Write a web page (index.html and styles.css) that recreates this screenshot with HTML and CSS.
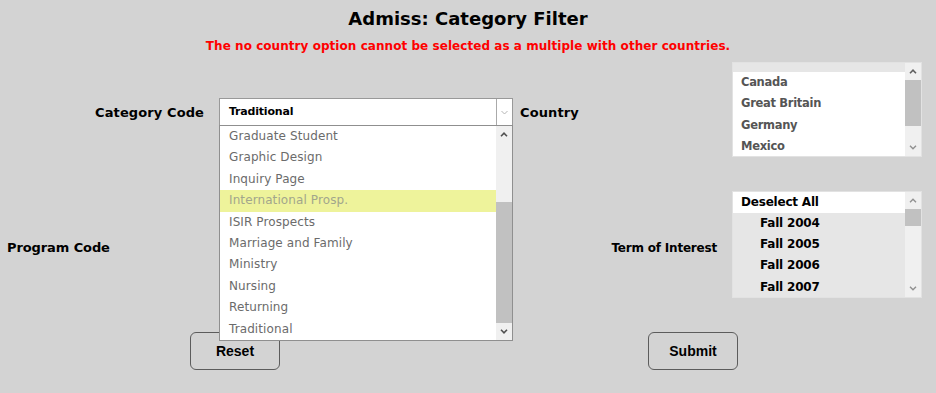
FILE: index.html
```html
<!DOCTYPE html>
<html lang="en">

<head>
    <meta charset="UTF-8">
    <meta name="viewport" content="width=device-width, initial-scale=1.0">
    <title>Admiss: Category Filter</title>
    <link rel="stylesheet" href="styles.css">
</head>

<body>
    <div id="page">
        <h1 class="title">Admiss: Category Filter</h1>
        <p class="warn">The no country option cannot be selected as a multiple with other countries.</p>

        <div class="filter">
            <div class="lbl lbl_cat">Category Code</div>
            <div class="sel_cell">
                <div class="select">
                    <span class="select_val">Traditional</span>
                    <span class="select_btn">
                        <svg width="7" height="5" viewBox="0 0 7 5"><polyline points="0.5,1 3.5,4 6.5,1" fill="none" stroke="#b5b5b5" stroke-width="1"/></svg>
                    </span>
                </div>
                <div class="dropdown">
                    <ul class="opts">
                        <li>Graduate Student</li>
                        <li>Graphic Design</li>
                        <li>Inquiry Page</li>
                        <li class="hover">International Prosp.</li>
                        <li>ISIR Prospects</li>
                        <li>Marriage and Family</li>
                        <li>Ministry</li>
                        <li>Nursing</li>
                        <li>Returning</li>
                        <li>Traditional</li>
                    </ul>
                    <div class="sbar">
                        <span class="arr"><svg width="8" height="5" viewBox="0 0 8 5"><polyline points="1,4.2 4,1.2 7,4.2" fill="none" stroke="#505050" stroke-width="1.6"/></svg></span>
                        <span class="track"><span class="thumb thumb_dd"></span></span>
                        <span class="arr"><svg width="8" height="5" viewBox="0 0 8 5"><polyline points="1,0.8 4,3.8 7,0.8" fill="none" stroke="#505050" stroke-width="1.6"/></svg></span>
                    </div>
                </div>
            </div>
            <div class="lbl lbl_country">Country</div>
            <div class="listbox country">
                <div class="lb_rows">
                    <div class="lb_cut"></div>
                    <div class="lb_row">Canada</div>
                    <div class="lb_row">Great Britain</div>
                    <div class="lb_row">Germany</div>
                    <div class="lb_row">Mexico</div>
                </div>
                <div class="sbar">
                    <span class="arr"><svg width="8" height="5" viewBox="0 0 8 5"><polyline points="1,4.2 4,1.2 7,4.2" fill="none" stroke="#606060" stroke-width="1.6"/></svg></span>
                    <span class="track"><span class="thumb thumb_country"></span></span>
                    <span class="arr"><svg width="8" height="5" viewBox="0 0 8 5"><polyline points="1,0.8 4,3.8 7,0.8" fill="none" stroke="#909090" stroke-width="1.4"/></svg></span>
                </div>
            </div>

            <div class="lbl lbl_prog">Program Code</div>
            <div></div>
            <div class="lbl lbl_term">Term of Interest</div>
            <div class="listbox term">
                <div class="lb_rows">
                    <div class="lb_row lb_all">Deselect All</div>
                    <div class="lb_row lb_sub">Fall 2004</div>
                    <div class="lb_row lb_sub">Fall 2005</div>
                    <div class="lb_row lb_sub">Fall 2006</div>
                    <div class="lb_row lb_sub">Fall 2007</div>
                </div>
                <div class="sbar">
                    <span class="arr"><svg width="8" height="5" viewBox="0 0 8 5"><polyline points="1,4.2 4,1.2 7,4.2" fill="none" stroke="#909090" stroke-width="1.4"/></svg></span>
                    <span class="track"><span class="thumb thumb_term"></span></span>
                    <span class="arr"><svg width="8" height="5" viewBox="0 0 8 5"><polyline points="1,0.8 4,3.8 7,0.8" fill="none" stroke="#909090" stroke-width="1.4"/></svg></span>
                </div>
            </div>
        </div>

        <div class="actions">
            <button type="reset" class="btn">Reset</button>
            <button type="submit" class="btn">Submit</button>
        </div>
    </div>
</body>

</html>
```

FILE: styles.css
```css
* {
    margin: 0;
    padding: 0;
    box-sizing: border-box;
}

ul,
li {
    list-style: none;
}

html,
body {
    background-color: #d3d3d3;
}

#page {
    width: 936px;
    height: 393px;
    font-family: "DejaVu Sans", "Liberation Sans", sans-serif;
    color: #000;
}

.title {
    text-align: center;
    font-size: 18px;
    line-height: 24px;
    padding-top: 7px;
}

.warn {
    text-align: center;
    color: #ff0000;
    font-size: 12px;
    font-weight: bold;
    line-height: 16px;
    margin-top: 7px;
    letter-spacing: 0.05px;
}

.filter {
    display: grid;
    grid-template-columns: 219px 294px 219px 190px;
    grid-template-rows: 95px 107px;
    row-gap: 34px;
    margin-top: 8px;
    align-items: center;
}

.lbl {
    font-size: 13px;
    font-weight: bold;
    letter-spacing: 0.1px;
}

.lbl_cat {
    text-align: right;
    padding-right: 15px;
    padding-top: 6px;
}

.lbl_country {
    padding-left: 7px;
    padding-top: 6px;
}

.lbl_prog {
    padding-left: 7px;
    padding-top: 6px;
    letter-spacing: -0.1px;
}

.lbl_term {
    text-align: right;
    padding-right: 15px;
    padding-top: 6px;
    font-size: 12px;
    letter-spacing: -0.2px;
}

/* category select */
.sel_cell {
    position: relative;
    align-self: start;
    margin-top: 36px;
    z-index: 2;
}

.select {
    display: flex;
    height: 28px;
    background-color: #fff;
    border: 1px solid #999;
}

.select_val {
    flex: 1;
    padding-left: 9px;
    font-size: 11px;
    font-weight: bold;
    line-height: 26px;
    letter-spacing: -0.2px;
}

.select_btn {
    width: 16px;
    border-left: 1px solid #aaa;
    display: flex;
    align-items: center;
    justify-content: center;
}

.dropdown {
    position: absolute;
    left: 0;
    top: 27px;
    width: 294px;
    height: 216px;
    background-color: #fff;
    border: 1px solid #8f8f8f;
    display: flex;
}

.opts {
    flex: 1;
}

.opts li {
    height: 21.4px;
    line-height: 21.4px;
    padding-left: 9px;
    font-size: 12px;
    color: #6b6b6b;
    letter-spacing: 0.1px;
}

.opts li.hover {
    background-color: #eef39b;
    color: #a2a68c;
}

/* fake scrollbars */
.sbar {
    width: 16px;
    background-color: #f0f0f0;
    display: flex;
    flex-direction: column;
}

.sbar .arr {
    height: 17px;
    display: flex;
    align-items: center;
    justify-content: center;
}

.sbar .track {
    flex: 1;
    position: relative;
}

.thumb {
    position: absolute;
    left: 0;
    right: 0;
    background-color: #c1c1c1;
}

.thumb_dd {
    top: 59px;
    bottom: 0;
}

.thumb_country {
    top: 0;
    height: 46px;
}

.thumb_term {
    top: 0;
    height: 17px;
}

/* list boxes */
.listbox {
    display: flex;
    background-color: #fff;
    border: 1px solid #e2e2e2;
    overflow: hidden;
}

.country {
    height: 95px;
}

.term {
    height: 107px;
}

.lb_rows {
    flex: 1;
}

.lb_cut {
    height: 9px;
    background-color: #e6e6e6;
}

.lb_row {
    height: 21.4px;
    line-height: 21.4px;
    padding-left: 8px;
    font-size: 12px;
    font-weight: bold;
    letter-spacing: -0.2px;
}

.country .lb_row {
    color: #555;
    font-size: 11.5px;
    letter-spacing: -0.3px;
}

.lb_all {
    height: 20.5px;
    line-height: 20.5px;
    color: #000;
}

.lb_sub {
    background-color: #e6e6e6;
    padding-left: 27px;
}

/* buttons */
.actions {
    display: flex;
    padding-left: 190px;
    gap: 368px;
    margin-top: 34px;
}

.btn {
    width: 90px;
    height: 38px;
    background-color: transparent;
    border: 1px solid #5c5c5c;
    border-radius: 6px;
    font-family: "Liberation Sans", Arial, sans-serif;
    font-size: 14px;
    font-weight: bold;
    color: #000;
    cursor: pointer;
}
```
